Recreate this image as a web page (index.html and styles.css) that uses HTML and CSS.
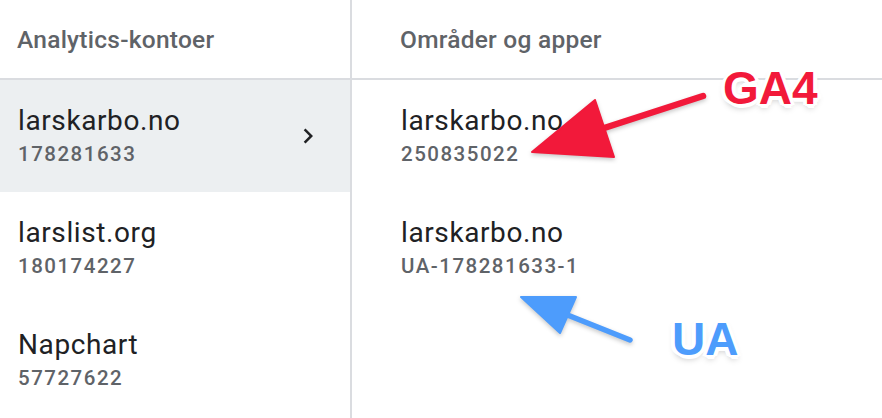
FILE: index.html
```html
<!DOCTYPE html>
<html lang="no">
<head>
<meta charset="utf-8">
<title>Analytics-kontoer</title>
<link rel="stylesheet" href="styles.css">
</head>
<body>
<div class="page">
  <section class="col col-accounts">
    <div class="col-head">Analytics-kontoer</div>
    <div class="row row-selected">
      <div class="row-text">
        <div class="row-title">larskarbo.no</div>
        <div class="row-sub">178281633</div>
      </div>
      <svg class="chev" viewBox="0 0 24 24" width="30" height="30"><path d="M10 6L8.59 7.41 13.17 12l-4.58 4.59L10 18l6-6z" fill="#202124"/></svg>
    </div>
    <div class="row">
      <div class="row-text">
        <div class="row-title">larslist.org</div>
        <div class="row-sub">180174227</div>
      </div>
    </div>
    <div class="row">
      <div class="row-text">
        <div class="row-title">Napchart</div>
        <div class="row-sub">57727622</div>
      </div>
    </div>
  </section>
  <section class="col col-props">
    <div class="col-head">Områder og apper</div>
    <div class="row">
      <div class="row-text">
        <div class="row-title">larskarbo.no</div>
        <div class="row-sub">250835022</div>
      </div>
    </div>
    <div class="row">
      <div class="row-text">
        <div class="row-title">larskarbo.no</div>
        <div class="row-sub">UA-178281633-1</div>
      </div>
    </div>
  </section>

  <svg class="arrows" width="882" height="418" viewBox="0 0 882 418">
    <g class="arrow-red">
      <line x1="703" y1="96" x2="598" y2="130" stroke="#f2193a" stroke-width="6.5" stroke-linecap="round"/>
      <polygon points="532,152 595,100 614,157" fill="#f2193a" stroke="#f2193a" stroke-width="2" stroke-linejoin="round"/>
    </g>
    <g class="arrow-blue">
      <line x1="630" y1="340" x2="565" y2="314" stroke="#4d9cfc" stroke-width="5.5" stroke-linecap="round"/>
      <polygon points="521,297 576,297 560,333" fill="#4d9cfc" stroke="#4d9cfc" stroke-width="2" stroke-linejoin="round"/>
    </g>
  </svg>
  <div class="label label-ga4">GA4</div>
  <div class="label label-ua">UA</div>
</div>
</body>
</html>
```

FILE: styles.css
```css
html, body {
  margin: 0;
  padding: 0;
  background: #ffffff;
}

body {
  font-family: Roboto, "Noto Sans", Arial, sans-serif;
  color: #202124;
  overflow: hidden;
}

.page {
  position: relative;
  display: flex;
  width: 882px;
  height: 418px;
}

.col {
  display: flex;
  flex-direction: column;
}

.col-accounts {
  width: 350px;
  flex: 0 0 350px;
  border-right: 2px solid #dadce0;
}

.col-props {
  flex: 1 1 auto;
}

.col-head {
  box-sizing: border-box;
  height: 80px;
  display: flex;
  align-items: center;
  padding: 1px 0 0 17px;
  border-bottom: 2px solid #dadce0;
  font-size: 24.5px;
  font-weight: 500;
  letter-spacing: 0.25px;
  color: #5f6368;
  line-height: 29px;
}

.col-props .col-head {
  padding-left: 48px;
}

.row {
  box-sizing: border-box;
  height: 112px;
  display: flex;
  align-items: center;
  justify-content: space-between;
  padding: 0 27px 0 18px;
}

.col-props .row {
  padding-left: 49px;
}

.row-selected {
  background: #eceff1;
}

.row-title {
  font-size: 28px;
  line-height: 32px;
  letter-spacing: 0.6px;
  color: #202124;
}

.row-sub {
  margin-top: 3px;
  font-size: 20.5px;
  line-height: 28px;
  font-weight: 500;
  letter-spacing: 1.5px;
  color: #5f6368;
}

.chev {
  display: block;
}

.arrows {
  position: absolute;
  left: 0;
  top: 0;
  pointer-events: none;
}

.arrow-red, .arrow-blue {
  filter: drop-shadow(0 2px 2px rgba(0, 0, 0, 0.22));
}

.label {
  position: absolute;
  font-family: "Liberation Sans", Arial, sans-serif;
  font-weight: 700;
  font-size: 46px;
  line-height: 46px;
  text-shadow:
    3px 0 0 #fff, -3px 0 0 #fff, 0 3px 0 #fff, 0 -3px 0 #fff,
    2px 2px 0 #fff, -2px 2px 0 #fff, 2px -2px 0 #fff, -2px -2px 0 #fff,
    4px 1px 0 #fff, -4px 1px 0 #fff, 1px 4px 0 #fff, 1px -4px 0 #fff,
    0 4px 6px rgba(0, 0, 0, 0.25);
}

.label-ga4 {
  left: 723px;
  top: 65px;
  color: #f2193a;
}

.label-ua {
  left: 672px;
  top: 316px;
  color: #4d9cfc;
}
```
